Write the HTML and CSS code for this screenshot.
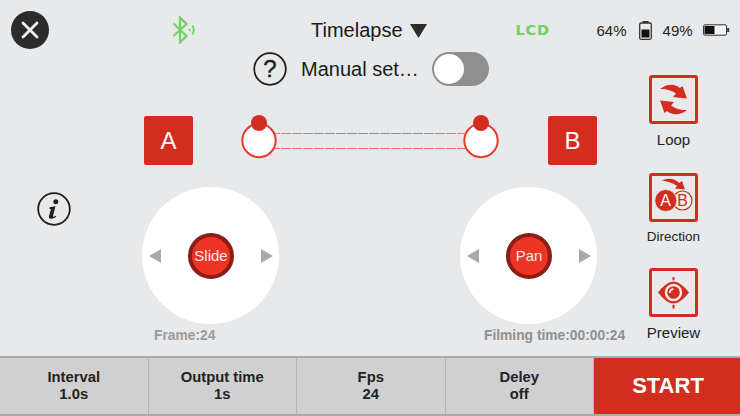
FILE: index.html
```html
<!DOCTYPE html>
<html lang="en">
<head>
<meta charset="utf-8">
<title>Timelapse</title>
<link rel="stylesheet" href="styles.css">
</head>
<body>
<div class="app">
  <header class="topbar">
    <svg class="close" viewBox="0 0 38 38"><circle cx="19" cy="19" r="19" fill="#2b2b2b"/><path d="M12 12 L26 26 M26 12 L12 26" stroke="#f2f2f2" stroke-width="2.8" stroke-linecap="round"/></svg>
    <svg class="bt" viewBox="0 0 24 28"><path d="M1.500 7.500 L14.500 20 L8 26.500 L8 1.500 L14.500 8 L1.500 20" fill="none" stroke="#6ed160" stroke-width="2.200"/><path d="M18.500 12 L16 14 L18.500 16 Z" fill="#6ed160"/><path d="M20.500 9.500 Q23 14 20.500 18.500" fill="none" stroke="#6ed160" stroke-width="1.800"/></svg>
    <div class="mode"><span>Timelapse</span><svg class="caret" viewBox="0 0 17 14"><path d="M0 0 H17 L8.500 14 Z" fill="#2b2b2b"/></svg></div>
    <span class="lcd">LCD</span>
    <span class="pct pct-a">64%</span>
    <svg class="bat-v" viewBox="0 0 13 19"><rect x="3.500" y="0" width="6" height="2" fill="#333"/><rect x="0.700" y="2" width="11.600" height="16.300" rx="1.500" fill="none" stroke="#333" stroke-width="1.300"/><rect x="2.500" y="8.500" width="8" height="8" fill="#111"/></svg>
    <span class="pct pct-b">49%</span>
    <svg class="bat-h" viewBox="0 0 27 12"><rect x="0.500" y="0.800" width="23" height="10.400" rx="1.500" fill="#f4f4f4" stroke="#333"/><rect x="1.500" y="2" width="10" height="8" fill="#111"/><rect x="24.200" y="4" width="2" height="4" fill="#333"/></svg>
  </header>

  <div class="body">
    <main class="main">
      <div class="manual">
        <svg class="help" viewBox="0 0 34 34"><circle cx="17" cy="17" r="15.800" fill="none" stroke="#1f1f1f" stroke-width="1.800"/><text x="17" y="24.500" text-anchor="middle" class="help-q">?</text></svg>
        <span class="manual-label">Manual set…</span>
        <div class="toggle"><div class="toggle-thumb"></div></div>
      </div>

      <div class="track-row">
        <div class="endpoint">A</div>
        <svg class="track" viewBox="0 0 260 46">
          <defs>
            <linearGradient id="fade" gradientUnits="userSpaceOnUse" x1="18" x2="240" y1="0" y2="0">
              <stop offset="0" stop-color="#ee7b70"/><stop offset="0.25" stop-color="#8d8d96"/><stop offset="0.75" stop-color="#8d8d96"/><stop offset="1" stop-color="#ee7b70"/>
            </linearGradient>
          </defs>
          <path d="M18 18.500 H240" stroke="url(#fade)" stroke-width="1" stroke-dasharray="10 1"/>
          <path d="M18 33.500 H240" stroke="#ef6e63" stroke-width="1" stroke-dasharray="10 1"/>
          <circle cx="18" cy="25.500" r="16.700" fill="#fff" stroke="#e8392a" stroke-width="2"/>
          <circle cx="18" cy="8" r="8" fill="#d32d1f"/>
          <circle cx="240" cy="25.500" r="16.700" fill="#fff" stroke="#e8392a" stroke-width="2"/>
          <circle cx="240" cy="8" r="8" fill="#d32d1f"/>
        </svg>
        <div class="endpoint endpoint-b">B</div>
      </div>

      <div class="controls">
        <svg class="info" viewBox="0 0 34 34"><circle cx="17" cy="17" r="15.800" fill="none" stroke="#1f1f1f" stroke-width="1.800"/><circle cx="18.800" cy="9.800" r="2.500" fill="#1f1f1f"/><path d="M12.500 15.300 L18.500 14.200 L16 24 Q15.800 25.500 18.800 23.800 L19.300 24.800 Q15.500 27.500 12.800 26.500 Q11.500 26 12 24 L14 17 L12.500 17 Z" fill="#1f1f1f"/></svg>
        <div class="stick stick-slide">
          <div class="pad">
            <span class="arrow arrow-l"></span>
            <div class="knob">Slide</div>
            <span class="arrow arrow-r"></span>
          </div>
          <div class="caption">Frame:24</div>
        </div>
        <div class="stick stick-pan">
          <div class="pad">
            <span class="arrow arrow-l"></span>
            <div class="knob">Pan</div>
            <span class="arrow arrow-r"></span>
          </div>
          <div class="caption caption-pan">Filming time:00:00:24</div>
        </div>
      </div>
    </main>

    <aside class="rail">
      <div class="tool">
        <svg class="tool-icon" viewBox="0 0 49 49"><rect x="1.500" y="1.500" width="46" height="46" rx="1.500" fill="none" stroke="#d32d1f" stroke-width="3"/><path d="M11 14 Q18 8.500 25 10 Q29 11 31 13 L33.500 11 L38 23.500 L24 22 L27 18.500 Q20 13.500 11 14 Z" fill="#d32d1f"/><path d="M38 35 Q31 40.500 24 39 Q20 38 18 36 L15.500 38 L11 25.500 L25 27 L22 30.500 Q29 35.500 38 35 Z" fill="#d32d1f"/></svg>
        <span class="tool-label">Loop</span>
      </div>
      <div class="tool tool-dir">
        <svg class="tool-icon" viewBox="0 0 49 49"><rect x="1.500" y="1.500" width="46" height="46" rx="1.500" fill="none" stroke="#d32d1f" stroke-width="3"/><path d="M12.500 7.500 Q20 4.500 26 7 Q28.500 8 30 10 L33 8 L36 16.500 L26 15.500 L28 13 Q22 8.500 12.500 7.500 Z" fill="#d32d1f"/><circle cx="33.500" cy="27.500" r="9.500" fill="#f3eeee" stroke="#d32d1f" stroke-width="1.200"/><circle cx="16.800" cy="27.500" r="11" fill="#d32d1f" stroke="#f3eeee" stroke-width="0.800"/><text x="16.500" y="33" text-anchor="middle" class="ab ab-a">A</text><text x="33.500" y="33" text-anchor="middle" class="ab ab-b">B</text></svg>
        <span class="tool-label tool-small">Direction</span>
      </div>
      <div class="tool tool-prev">
        <svg class="tool-icon" viewBox="0 0 49 49"><rect x="1.500" y="1.500" width="46" height="46" rx="1.500" fill="none" stroke="#d32d1f" stroke-width="3"/><path d="M9 24.500 Q17.500 13.500 24.500 13.500 Q31.500 13.500 40 24.500 Q31.500 35.500 24.500 35.500 Q17.500 35.500 9 24.500 Z" fill="#d32d1f"/><circle cx="24.500" cy="24.500" r="7.500" fill="#d32d1f" stroke="#fbeeec" stroke-width="2.400"/><path d="M20.800 25 A3.800 3.800 0 0 1 24.500 21" fill="none" stroke="#fbeeec" stroke-width="1.800"/><path d="M24.500 9 V12.300 M24.500 36.700 V40.500" stroke="#d32d1f" stroke-width="2"/></svg>
        <span class="tool-label">Preview</span>
      </div>
    </aside>
  </div>

  <footer class="bottombar">
    <div class="cell">Interval<br>1.0s</div>
    <div class="cell">Output time<br>1s</div>
    <div class="cell">Fps<br>24</div>
    <div class="cell">Deley<br>off</div>
    <div class="start">START</div>
  </footer>
</div>
</body>
</html>
```

FILE: styles.css
```css
* { box-sizing: border-box; }
html, body { margin: 0; padding: 0; }
body {
  width: 740px;
  height: 416px;
  overflow: hidden;
  background: #e8e9eb;
  font-family: "Liberation Sans", Arial, sans-serif;
  color: #1a1a1a;
}
.app { width: 740px; height: 416px; display: flex; flex-direction: column; }

/* top bar */
.topbar { height: 52px; display: flex; align-items: center; padding: 8px 0 0 11px; flex: none; }
.topbar > * { flex: none; }
.close { width: 38px; height: 38px; }
.bt { width: 24px; height: 28px; margin-left: 123px; }
.mode { display: flex; align-items: center; margin-left: 115px; font-size: 20px; }
.caret { width: 17px; height: 14px; margin-left: 7px; margin-top: 1px; flex: none; }
.lcd {
  margin-left: 89px;
  width: 35px;
  font-family: "DejaVu Sans", sans-serif;
  font-weight: 700;
  font-size: 14.500px;
  letter-spacing: 0.800px;
  color: #6ed160;
  line-height: 18px;
  white-space: nowrap;
}
.pct { font-size: 15px; color: #222; }
.pct-a { margin-left: 46px; }
.bat-v { width: 13px; height: 19px; margin-left: 12px; }
.pct-b { margin-left: 11px; }
.bat-h { width: 27px; height: 12px; margin-left: 10px; }

/* body */
.body { flex: 1; display: flex; min-height: 0; }
.main { width: 626px; flex: none; }
.manual { display: flex; align-items: center; height: 34px; padding-left: 253px; }
.help { width: 34px; height: 34px; flex: none; }
.help-q { font-family: "Liberation Sans", sans-serif; font-size: 24px; fill: #1f1f1f; stroke: #1f1f1f; stroke-width: 0.400px; }
.manual-label { font-size: 20px; margin-left: 14px; white-space: nowrap; width: 131px; flex: none; }
.toggle { width: 57px; height: 34px; border-radius: 17px; background: #8f8f8f; padding: 2px; flex: none; }
.toggle-thumb { width: 30px; height: 30px; border-radius: 50%; background: #fff; }

.track-row { display: flex; align-items: flex-start; margin-top: 30px; padding-left: 144px; height: 71px; }
.endpoint {
  width: 49px;
  height: 49px;
  background: #d32d1f;
  border-radius: 2px;
  color: #fff;
  font-size: 24px;
  display: flex;
  align-items: center;
  justify-content: center;
  flex: none;
}
.track { width: 260px; height: 46px; margin-left: 48px; flex: none; margin-top: -1px; }
.endpoint-b { margin-left: 47px; }

.controls { display: flex; align-items: flex-start; padding-left: 37px; }
.info { width: 34px; height: 34px; margin-top: 5px; flex: none; }
.stick { flex: none; width: 137px; }
.stick-slide { margin-left: 71px; }
.stick-pan { margin-left: 181px; }
.pad {
  width: 137px;
  height: 137px;
  border-radius: 50%;
  background: #fff;
  display: flex;
  align-items: center;
  justify-content: space-between;
  padding: 0 6px 0 7px;
}
.arrow { width: 0; height: 0; border-top: 7px solid transparent; border-bottom: 7px solid transparent; flex: none; }
.arrow-l { border-right: 12px solid #a9a9a9; }
.arrow-r { border-left: 12px solid #a9a9a9; }
.knob {
  width: 46px;
  height: 46px;
  border-radius: 50%;
  background: #ee3524;
  border: 4px solid #8b1e16;
  color: #f8e8e6;
  font-size: 15px;
  display: flex;
  align-items: center;
  justify-content: center;
  flex: none;
}
.caption { font-size: 13.800px; font-weight: 700; color: #9a9a9a; margin-top: 4px; padding-left: 12px; white-space: nowrap; line-height: 16px; }
.caption-pan { padding-left: 24px; color: #8f8f8f; }

/* right rail */
.rail { flex: none; width: 95px; padding-top: 23px; display: flex; flex-direction: column; align-items: center; }
.tool { display: flex; flex-direction: column; align-items: center; height: 49px; }
.tool-icon { width: 49px; height: 49px; flex: none; }
.tool-label { font-size: 15px; line-height: 17px; margin-top: 7px; color: #222; white-space: nowrap; }
.tool-small { font-size: 13.500px; margin-top: 6px; }
.tool-dir { margin-top: 49px; }
.tool-prev { margin-top: 46px; }
.ab { font-family: "Liberation Sans", sans-serif; font-size: 16px; }
.ab-a { fill: #fff; }
.ab-b { fill: #d32d1f; }

/* bottom bar */
.bottombar {
  height: 60px;
  flex: none;
  display: flex;
  background: #d0d0d0;
  border-top: 2px solid #a9a9a9;
  border-bottom: 2px solid #a9a9a9;
}
.cell {
  width: 148.500px;
  flex: none;
  border-right: 1.500px solid #b4b4b4;
  display: flex;
  align-items: center;
  justify-content: center;
  text-align: center;
  font-size: 14.800px;
  font-weight: 700;
  line-height: 17px;
  color: #222;
}
.start {
  flex: 1;
  background: #d32d1f;
  color: #fff;
  font-size: 22px;
  font-weight: 700;
  display: flex;
  align-items: center;
  justify-content: center;
  padding-left: 2px;
}
```
